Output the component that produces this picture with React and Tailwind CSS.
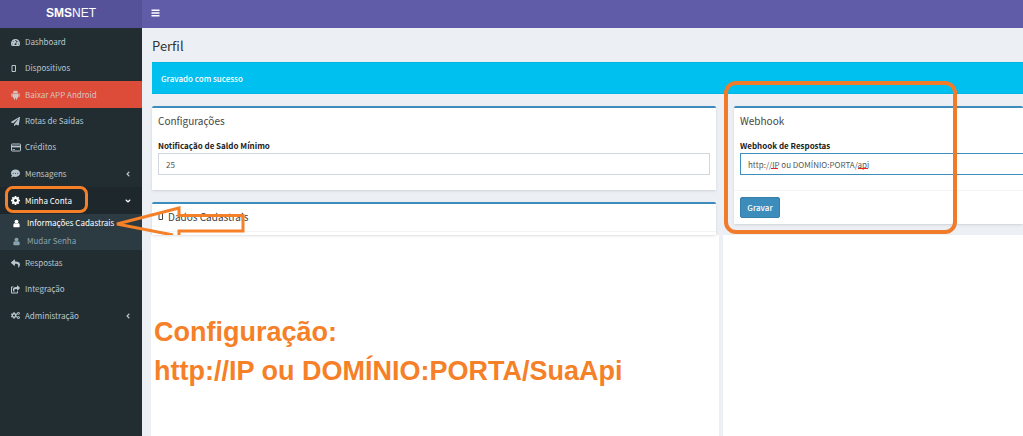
import React from "react";
import {
  FaTachometerAlt,
  FaPaperPlane,
  FaCommentDots,
  FaCogs,
  FaReply,
  FaShareSquare,
  FaAngleLeft,
  FaAngleDown,
} from "react-icons/fa";

// Empty phone outline used for the devices entries
const PhoneIcon = () => (
  <svg width="6" height="9" viewBox="0 0 6 9" fill="none" stroke="currentColor">
    <path d="M1 1.500h3.500v6h-3.500z" />
  </svg>
);

const AndroidIcon = () => (
  <svg width="9" height="10" viewBox="0 0 18 20" fill="currentColor">
    <path d="M4 6a5 4.500 0 0 1 10 0z" />
    <path d="M5.500 0.500l1.500 2.500M12.500 0.500l-1.500 2.500" stroke="currentColor" />
    <path d="M4 6.800h10v8.200a1.200 1.200 0 0 1-1.200 1.200h-7.600a1.200 1.200 0 0 1-1.200-1.200z" />
    <rect x="0.8" y="6.600" width="2.600" height="7.400" rx="1.300" />
    <rect x="14.600" y="6.600" width="2.600" height="7.400" rx="1.300" />
    <rect x="5.600" y="13" width="2.600" height="6.500" rx="1.300" />
    <rect x="9.800" y="13" width="2.600" height="6.500" rx="1.300" />
  </svg>
);

const CardIcon = () => (
  <svg width="10" height="9" viewBox="0 0 10 9" fill="none" stroke="currentColor">
    <rect x="0.5" y="1" width="9" height="7" rx="0.6" />
    <path d="M0.500 3.500h9" strokeWidth="1.8" />
    <path d="M1.500 6.500h2.500" strokeWidth="0.8" />
  </svg>
);

const CogIcon = () => (
  <svg width="9" height="9" viewBox="0 128 1536 1536" fill="currentColor">
    <path d="M1024 896q0-106-75-181t-181-75-181 75-75 181 75 181 181 75 181-75 75-181zm512-109v222q0 12-8 23t-20 13l-185 28q-19 54-39 91 35 50 107 138 10 12 10 25t-9 23q-27 37-99 108t-94 71q-12 0-26-9l-138-108q-44 23-91 38-16 136-29 186-7 28-36 28h-222q-14 0-24.500-8.500t-11.500-21.500l-28-184q-49-16-90-37l-141 107q-10 9-25 9-14 0-25-11-126-114-165-168-7-10-7-23 0-12 8-23 15-21 51-66.500t54-70.500q-27-50-41-99l-183-27q-13-2-21-12.500t-8-23.500v-222q0-12 8-23t19-13l186-28q14-46 39-92-40-57-107-138-10-12-10-24 0-10 9-23 26-36 98.500-107.500t94.500-71.500q13 0 26 10l138 107q44-23 91-38 16-136 29-186 7-28 36-28h222q14 0 24.500 8.500t11.500 21.500l28 184q49 16 90 37l142-107q9-9 24-9 13 0 25 10 129 119 165 170 7 8 7 22 0 12-8 23-15 21-51 66.500t-54 70.500q26 50 41 98l183 28q13 2 21 12.500t8 23.500z" />
  </svg>
);

const UserIcon = () => (
  <svg width="9" height="9" viewBox="0 0 1792 1792" fill="currentColor">
    <path d="M1536 1399q0 109-62.500 187t-150.500 78h-854q-88 0-150.500-78t-62.500-187q0-85 8.500-160.500t31.500-152 58.500-131 94-89 134.500-34.500q131 128 313 128t313-128q76 0 134.500 34.500t94 89 58.500 131 31.500 152 8.500 160.500zm-256-887q0 159-112.500 271.500t-271.500 112.500-271.500-112.500-112.500-271.500 112.500-271.500 271.500-112.500 271.500 112.500 112.500 271.500z" />
  </svg>
);

const menu = [
  { label: "Dashboard", icon: FaTachometerAlt },
  { label: "Dispositivos", icon: PhoneIcon },
  { label: "Baixar APP Android", icon: AndroidIcon, danger: true },
  { label: "Rotas de Saídas", icon: FaPaperPlane },
  { label: "Créditos", icon: CardIcon },
  { label: "Mensagens", icon: FaCommentDots, arrow: true },
  {
    label: "Minha Conta",
    icon: CogIcon,
    open: true,
    children: [
      { label: "Informações Cadastrais", active: true },
      { label: "Mudar Senha" },
    ],
  },
  { label: "Respostas", icon: FaReply },
  { label: "Integração", icon: FaShareSquare },
  { label: "Administração", icon: FaCogs, arrow: true },
];

const MenuItem = ({ item }) => {
  const Icon = item.icon;
  const height = item.danger || item.open || item.arrow ? "h-[27px]" : "h-[26px]";
  const color = item.danger
    ? "bg-[#dd4b39] text-[#d5c3c2]"
    : item.open
      ? "bg-[#1e282c] text-white"
      : "text-[#b8c7ce]";

  return (
    <li>
      <a href="#" className={`relative flex items-center pl-[11px] pr-[10px] ${height} ${color}`}>
        <span className="w-[14px]">
          <Icon size={9} />
        </span>
        <span className="flex-1">{item.label}</span>
        {item.arrow && <FaAngleLeft size={8} />}
        {item.open && <FaAngleDown size={8} />}
        {item.open && (
          <span className="absolute left-[5px] -top-px w-[83px] h-[27px] border-3 border-[#f58028] rounded-lg" />
        )}
      </a>
      {item.children && (
        <ul className="bg-[#2c3b41]">
          {item.children.map((c) => (
            <li key={c.label}>
              <a
                href="#"
                className={`flex items-center h-[18px] pl-3 ${
                  c.active ? "text-white" : "text-[#8aa4af]"
                }`}
              >
                <span className="w-[15px]">
                  <UserIcon />
                </span>
                {c.label}
              </a>
            </li>
          ))}
        </ul>
      )}
    </li>
  );
};

const Box = ({ title, icon, children }) => (
  <section className="bg-white border-t-2 border-[#3c8dbc] rounded-t-xs shadow-sm">
    <h2 className="flex items-center gap-1 h-[27px] px-[6px] pb-[2px] text-[10px] text-[#444]">
      {icon}
      {title}
    </h2>
    {children}
  </section>
);

const App = () => {
  return (
    <div className="flex min-h-screen bg-[#ecf0f5] text-[8px] leading-3 text-[#333] font-['Noto_Sans_CJK_SC',sans-serif]">
      <aside className="w-[142px] shrink-0 bg-[#222d32]">
        <a
          href="#"
          className="flex items-center justify-center h-7 pb-[3px] bg-[#555299] text-white text-[12px] font-['Liberation_Sans',sans-serif]"
        >
          <b>SMS</b>NET
        </a>
        <ul className="pt-px">
          {menu.map((item) => (
            <MenuItem key={item.label} item={item} />
          ))}
        </ul>
      </aside>

      <div className="flex-1 min-w-0 flex flex-col">
        <header className="flex items-center h-7 pb-[3px] pl-[9px] bg-[#605ca8] text-white">
          <button aria-label="Menu">
            <svg width="9" height="8" viewBox="0 0 9 8" fill="currentColor">
              <path d="M0.500 0.500h8v1.500h-8zM0.500 3.300h8v1.500h-8zM0.500 6.100h8v1.500h-8z" />
            </svg>
          </button>
        </header>

        <main className="flex-1 flex flex-col">
          <h1 className="h-[34px] pt-2 pl-[10px] text-[13px] leading-5">Perfil</h1>
          <div className="flex items-center h-8 ml-[10px] pl-[9px] pt-px bg-[#00c0ef] border-y border-[#00b5e3] text-white font-medium">
            Gravado com sucesso
          </div>

          <div className="relative grid grid-cols-[564fr_289fr] gap-[18px] pt-3 pl-[10px]">
            <div className="min-w-0 flex flex-col gap-3">
              <Box title="Configurações">
                <div className="h-[55px] px-[6px] pt-[5px]">
                  <label htmlFor="saldo" className="block font-bold text-[#222]">
                    Notificação de Saldo Mínimo
                  </label>
                  <input
                    id="saldo"
                    defaultValue="25"
                    className="block w-full h-[22px] mt-px px-[7px] border border-[#d2d6de] text-[#555] outline-none"
                  />
                </div>
              </Box>
              <Box title="Dados Cadastrais" icon={<PhoneIcon />}>
                <div className="h-1 border-t border-[#f4f4f4]" />
              </Box>
            </div>

            <div className="min-w-0">
              <Box title="Webhook">
                <div className="h-[55px] pl-[6px] pt-[5px]">
                  <label htmlFor="webhook" className="block font-bold text-[#222]">
                    Webhook de Respostas
                  </label>
                  <div className="relative mt-px">
                    <input
                      id="webhook"
                      defaultValue="http://IP ou DOMÍNIO:PORTA/api"
                      spellCheck={false}
                      className="block w-full h-[22px] px-[7px] border border-r-0 border-[#3c8dbc] text-[#555] outline-none"
                    />
                    {/* spell check marks */}
                    <svg
                      className="absolute left-0 top-0 pointer-events-none"
                      width="140"
                      height="22"
                      fill="none"
                      stroke="#f02020"
                    >
                      <path d="M31 16l1-1 1 1 1-1 1 1 1-1 1 1 1-1M118 16l1-1 1 1 1-1 1 1 1-1 1 1 1-1 1 1 1-1 1 1" />
                    </svg>
                  </div>
                </div>
                <div className="h-[34px] pl-[6px] pt-[6px] border-t border-[#f4f4f4]">
                  <button className="h-[21px] w-10 bg-[#3c8dbc] border border-[#367fa9] rounded-xs text-white font-medium">
                    Gravar
                  </button>
                </div>
              </Box>
            </div>

            <span className="absolute left-[582px] -top-[13px] w-[233px] h-[153px] border-4 border-[#f07c2b] rounded-xl pointer-events-none" />
            <svg
              className="absolute -left-[28px] top-[110px] pointer-events-none"
              width="132"
              height="31"
              fill="none"
              stroke="#f58028"
              strokeWidth="3"
            >
              <path d="M59 31L3 20L65 4V11.500H129V27H65V31" />
            </svg>
          </div>

          <div className="flex-1 grid grid-cols-[568fr_300fr] gap-1 pl-[9px]">
            <div className="min-w-0 bg-white pt-[78px] pl-[3px] text-[#f58028] text-[27px] leading-[39px] font-bold font-['Liberation_Sans',sans-serif]">
              <p>Configuração:</p>
              <p>http://IP ou DOMÍNIO:PORTA/SuaApi</p>
            </div>
            <div className="min-w-0 bg-white" />
          </div>
        </main>
      </div>
    </div>
  );
};

export default App;
